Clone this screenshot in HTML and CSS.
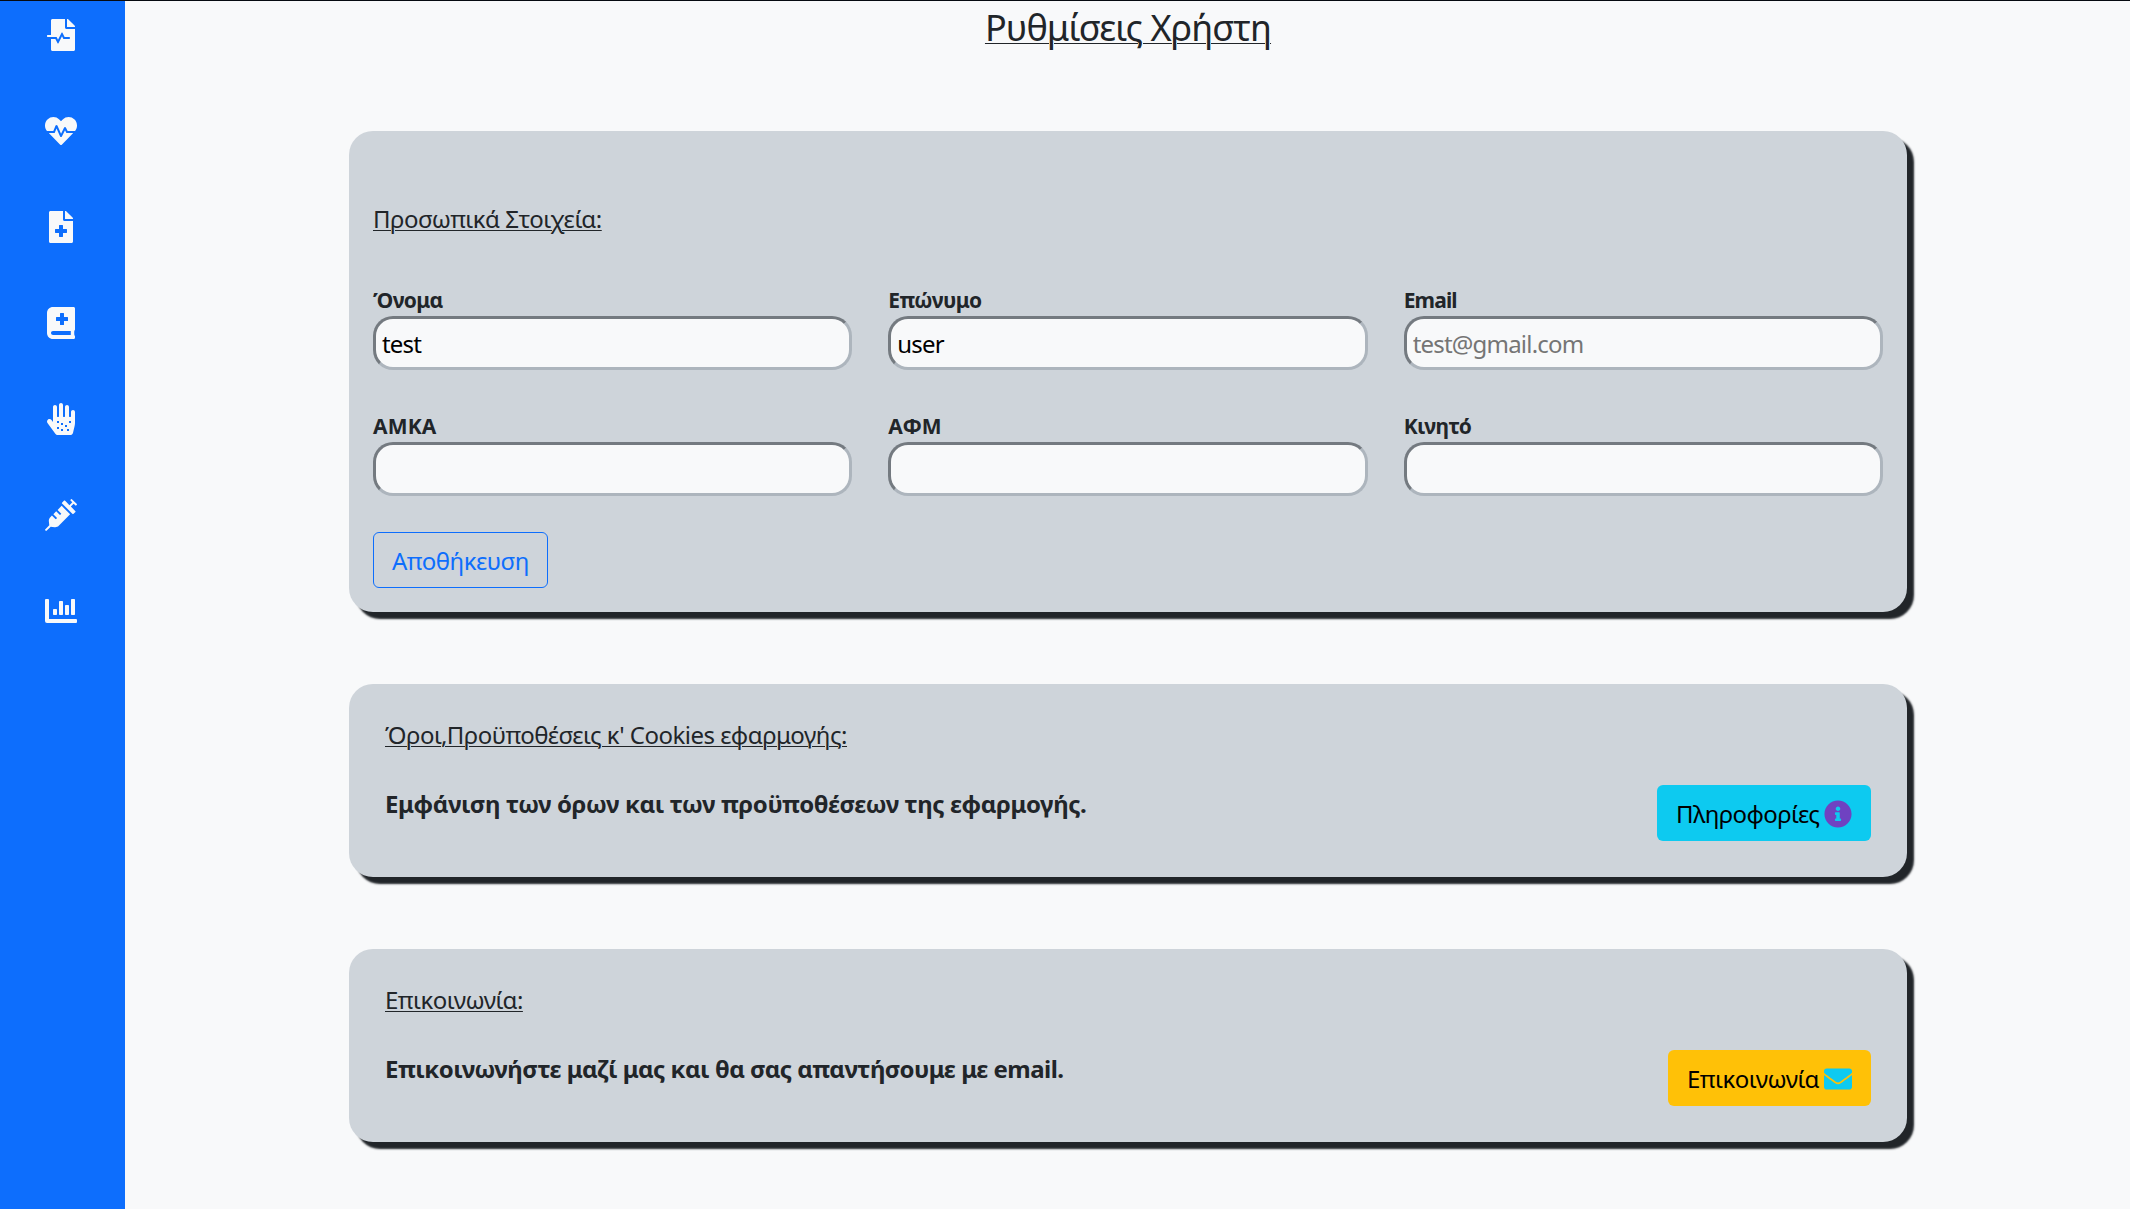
FILE: index.html
```html
<!DOCTYPE html>
<html lang="el">
<head>
<meta charset="utf-8">
<title>Ρυθμίσεις Χρήστη</title>
<link rel="stylesheet" href="styles.css">
</head>
<body>
<div class="app">
  <nav class="sidebar">
    <a class="nav-item"><svg class="icon" viewBox="0 0 448 512"><path d="M288 136V0H88C74.700 0 64 10.700 64 24v232H8c-4.400 0-8 3.600-8 8v16c0 4.400 3.600 8 8 8h140.900c3 0 5.800 1.700 7.200 4.400l19.900 39.800 56.800-113.700c2.900-5.900 11.400-5.900 14.300 0l34.700 69.500H352c8.800 0 16 7.200 16 16s-7.200 16-16 16h-89.900L240 275.800l-56.800 113.700c-2.900 5.900-11.400 5.900-14.300 0L134.100 320H64v168c0 13.300 10.700 24 24 24h336c13.300 0 24-10.700 24-24V160H312c-13.200 0-24-10.800-24-24zm153-31L343.100 7c-4.500-4.500-10.600-7-17-7H320v128h128v-6.100c0-6.300-2.500-12.400-7-16.900z"/></svg></a>
    <a class="nav-item"><svg class="icon" viewBox="0 0 512 512"><path d="M320.200 243.800l-49.700 99.400c-6 12.100-23.400 11.700-28.900-.6l-56.900-126.300-30 71.700H60.600l182.500 186.500c7.100 7.300 18.600 7.300 25.700 0L451.400 288H342.300l-22.100-44.200zM473.700 73.900l-2.400-2.500c-51.500-52.600-135.800-52.600-187.400 0L256 100l-27.900-28.500c-51.500-52.700-135.900-52.700-187.400 0l-2.400 2.400C-10.400 123.700-12.500 203 31 256h102.400l35.900-86.200c5.400-12.900 23.600-13.100 29.200-.4l58.200 129.300 49-97.900c5.900-11.800 22.700-11.800 28.600 0l27.600 55.200H481c43.500-53 41.400-132.300-7.300-182.100z"/></svg></a>
    <a class="nav-item"><svg class="icon" viewBox="0 0 384 512"><path d="M377 105L279.100 7c-4.500-4.500-10.600-7-17-7H256v128h128v-6.100c0-6.300-2.500-12.400-7-16.900zm-153 31V0H24C10.700 0 0 10.700 0 24v464c0 13.300 10.700 24 24 24h336c13.300 0 24-10.700 24-24V160H248c-13.200 0-24-10.800-24-24zm64 160v48c0 4.400-3.600 8-8 8h-56v56c0 4.400-3.600 8-8 8h-48c-4.400 0-8-3.600-8-8v-56h-56c-4.400 0-8-3.600-8-8v-48c0-4.400 3.600-8 8-8h56v-56c0-4.400 3.600-8 8-8h48c4.400 0 8 3.600 8 8v56h56c4.400 0 8 3.600 8 8z"/></svg></a>
    <a class="nav-item"><svg class="icon" viewBox="0 0 448 512"><path d="M448 358.400V25.600c0-16-9.600-25.600-25.600-25.600H96C41.600 0 0 41.600 0 96v320c0 54.400 41.600 96 96 96h326.400c12.800 0 25.600-9.600 25.600-25.600v-16q0-9.600-9.600-19.200c-3.200-16-3.200-60.800 0-73.600q9.600-4.800 9.600-19.200zM144 168a8 8 0 0 1 8-8h56v-56a8 8 0 0 1 8-8h48a8 8 0 0 1 8 8v56h56a8 8 0 0 1 8 8v48a8 8 0 0 1-8 8h-56v56a8 8 0 0 1-8 8h-48a8 8 0 0 1-8-8v-56h-56a8 8 0 0 1-8-8zm236.800 280H96c-16 0-32-12.800-32-32s12.800-32 32-32h284.800z"/></svg></a>
    <a class="nav-item"><svg class="icon" viewBox="0 0 448 512"><path d="M416 112c-17.600 0-32 14.400-32 32v72c0 4.400-3.600 8-8 8h-16c-4.400 0-8-3.600-8-8V64c0-17.600-14.400-32-32-32s-32 14.400-32 32v152c0 4.400-3.600 8-8 8h-16c-4.400 0-8-3.600-8-8V32c0-17.600-14.400-32-32-32s-32 14.400-32 32v184c0 4.400-3.600 8-8 8h-16c-4.400 0-8-3.600-8-8V64c0-17.600-14.400-32-32-32S96 46.400 96 64v241l-23.600-32.500c-13-17.900-38-21.800-55.900-8.800S-5.300 301.700 7.700 319.600l125.600 172.700c9 12.400 23.500 19.700 38.800 19.700h197.400c22.300 0 41.600-15.300 46.700-37l26.500-112.700c3.500-14.900 5.300-30.100 5.300-45.300V144c0-17.600-14.400-32-32-32z"/><path class="dots" d="M160 288h32v32h-32zM224 320h32v32h-32zM352 288h32v32h-32zM288 352h32v32h-32zM160 384h32v32h-32zM224 416h32v32h-32zM320 416h32v32h-32z"/></svg></a>
    <a class="nav-item"><svg class="icon" viewBox="0 0 512 512"><path d="M201.500 174.800l55.700 55.800c3.100 3.100 3.100 8.200 0 11.300l-11.300 11.300c-3.100 3.100-8.200 3.100-11.300 0l-55.700-55.800-45.300 45.300 55.800 55.800c3.100 3.100 3.100 8.200 0 11.300l-11.300 11.300c-3.100 3.100-8.200 3.100-11.300 0L111 265.200l-26.400 26.400c-17.300 17.300-25.600 41.100-23 65.400l7.100 63.600L2.300 487c-3.100 3.100-3.100 8.200 0 11.300l11.300 11.300c3.100 3.100 8.200 3.100 11.300 0l66.300-66.300 63.600 7.100c23.900 2.600 47.900-5.400 65.400-23l181.900-181.900-135.700-135.700-64.900 65zm308.200-93.300L430.500 2.300c-3.100-3.100-8.200-3.100-11.300 0l-11.300 11.300c-3.100 3.100-3.100 8.200 0 11.300l28.300 28.300-45.300 45.300-56.600-56.600-17-17c-3.100-3.100-8.200-3.100-11.300 0l-33.900 33.900c-3.100 3.100-3.100 8.200 0 11.300l17 17L424.800 223l17 17c3.100 3.100 8.200 3.100 11.300 0l33.900-34c3.100-3.100 3.100-8.200 0-11.300l-73.500-73.500 45.300-45.300 28.300 28.300c3.100 3.100 8.200 3.100 11.300 0l11.300-11.300c3.100-3.200 3.100-8.200 0-11.400z"/></svg></a>
    <a class="nav-item"><svg class="icon" viewBox="0 0 512 512"><path d="M16 64h32a16 16 0 0 1 16 16v304h432a16 16 0 0 1 16 16v32a16 16 0 0 1-16 16H32a32 32 0 0 1-32-32V80a16 16 0 0 1 16-16zM141 224h38a13 13 0 0 1 13 13v70a13 13 0 0 1-13 13h-38a13 13 0 0 1-13-13v-70a13 13 0 0 1 13-13zM237 96h38a13 13 0 0 1 13 13v198a13 13 0 0 1-13 13h-38a13 13 0 0 1-13-13V109a13 13 0 0 1 13-13zM333 160h38a13 13 0 0 1 13 13v134a13 13 0 0 1-13 13h-38a13 13 0 0 1-13-13V173a13 13 0 0 1 13-13zM429 64h38a13 13 0 0 1 13 13v230a13 13 0 0 1-13 13h-38a13 13 0 0 1-13-13V77a13 13 0 0 1 13-13z"/></svg></a>
  </nav>
  <main class="content">
    <h1 class="page-title">Ρυθμίσεις Χρήστη</h1>

    <form class="card card-profile">
      <h2 class="card-heading profile-heading">Προσωπικά Στοιχεία:</h2>
      <div class="fields">
        <label class="field"><span class="label">Όνομα</span><input class="input" type="text" value="test"></label>
        <label class="field"><span class="label">Επώνυμο</span><input class="input" type="text" value="user"></label>
        <label class="field"><span class="label label-latin">Email</span><input class="input" type="text" placeholder="test@gmail.com"></label>
        <label class="field"><span class="label label-caps">ΑΜΚΑ</span><input class="input" type="text"></label>
        <label class="field"><span class="label label-caps">ΑΦΜ</span><input class="input" type="text"></label>
        <label class="field"><span class="label">Κινητό</span><input class="input" type="text"></label>
      </div>
      <button class="btn btn-save" type="button">Αποθήκευση</button>
    </form>

    <section class="card card-info">
      <h2 class="card-heading">Όροι,Προϋποθέσεις κ' Cookies εφαρμογής:</h2>
      <div class="card-row">
        <p class="card-text terms-text">Εμφάνιση των όρων και των προϋποθέσεων της εφαρμογής.</p>
        <button class="btn btn-info" type="button">Πληροφορίες<svg class="btn-icon icon-info" viewBox="0 0 512 512"><path d="M256 8C119.043 8 8 119.083 8 256c0 136.997 111.043 248 248 248s248-111.003 248-248C504 119.083 392.957 8 256 8zm0 110c23.196 0 42 18.804 42 42s-18.804 42-42 42-42-18.804-42-42 18.804-42 42-42zm56 254c0 6.627-5.373 12-12 12h-88c-6.627 0-12-5.373-12-12v-24c0-6.627 5.373-12 12-12h12v-64h-12c-6.627 0-12-5.373-12-12v-24c0-6.627 5.373-12 12-12h64c6.627 0 12 5.373 12 12v100h12c6.627 0 12 5.373 12 12v24z"/></svg></button>
      </div>
    </section>

    <section class="card card-info">
      <h2 class="card-heading">Επικοινωνία:</h2>
      <div class="card-row">
        <p class="card-text contact-text">Επικοινωνήστε μαζί μας και θα σας απαντήσουμε με email.</p>
        <button class="btn btn-contact" type="button">Επικοινωνία<svg class="btn-icon icon-mail" viewBox="0 0 512 512"><path d="M502.300 190.800c3.900-3.100 9.700-.2 9.700 4.700V400c0 26.500-21.500 48-48 48H48c-26.500 0-48-21.500-48-48V195.600c0-5 5.700-7.800 9.700-4.700 22.400 17.400 52.100 39.500 154.100 113.600 21.100 15.400 56.700 47.800 92.200 47.600 35.700.3 72-32.800 92.300-47.600 102-74.100 131.600-96.300 154-113.700zM256 320c23.200.4 56.600-29.200 73.400-41.400 132.700-96.300 142.800-104.700 173.400-128.700 5.800-4.500 9.200-11.500 9.200-18.900v-19c0-26.500-21.500-48-48-48H48c-26.500 0-48 21.500-48 48v19c0 7.400 3.400 14.300 9.200 18.900 30.600 23.900 40.700 32.400 173.400 128.700 16.800 12.200 50.200 41.800 73.400 41.400z"/></svg></button>
      </div>
    </section>
  </main>
</div>
</body>
</html>
```

FILE: styles.css
```css
* {
  box-sizing: border-box;
}

body {
  margin: 0;
  background: #f8f9fa;
  color: #212529;
  font-family: "Noto Sans", "Open Sans", sans-serif;
  font-size: 24px;
  line-height: 36px;
}

.app {
  display: flex;
  height: 1209px;
  overflow: hidden;
  border-top: 1px solid #060a10;
}

.sidebar {
  display: flex;
  flex-direction: column;
  gap: 64px;
  flex: 0 0 125px;
  padding: 18px 3px 0 0;
  background: #0d6efd;
}

.nav-item {
  display: flex;
  justify-content: center;
  height: 32px;
}

.icon {
  height: 32px;
  fill: #f8f9fa;
}

.dots {
  fill: #0d6efd;
}

.content {
  flex: 1;
  padding: 5px 223px 0 224px;
}

.page-title {
  margin: 0 0 82px;
  font-size: 36px;
  font-weight: 400;
  line-height: 43px;
  letter-spacing: -0.94px;
  text-align: center;
  text-decoration: underline 1px;
  text-underline-offset: 2px;
}

.card {
  margin-bottom: 72px;
  border-radius: 24px;
  background: #ced4da;
  box-shadow: 7px 7px 2px #212529;
}

.card-profile {
  padding: 70px 24px 24px;
}

.card-info {
  padding: 36px;
}

.card-heading {
  margin: 0;
  font-size: 24px;
  font-weight: 400;
  line-height: 29px;
  letter-spacing: -0.5px;
  text-decoration: underline 1px;
  text-underline-offset: 2px;
}

.profile-heading {
  line-height: 36px;
}

.fields {
  display: grid;
  grid-template-columns: repeat(3, 1fr);
  gap: 40px 36px;
  margin: 47px 0 36px;
}

.field {
  display: flex;
  flex-direction: column;
}

.label {
  font-size: 21px;
  font-weight: 700;
  line-height: 32px;
  letter-spacing: -0.6px;
}

.label-caps {
  letter-spacing: 0.2px;
}

.label-latin {
  letter-spacing: -0.85px;
}

.input {
  width: 100%;
  height: 54px;
  padding: 0 6px;
  border: 3px solid;
  border-color: #747a80 #adb5bd #adb5bd #747a80;
  border-radius: 20px;
  background: #f8f9fa;
  color: #000;
  font: 24px "Noto Sans", "Open Sans", sans-serif;
  letter-spacing: -0.8px;
}

.input::placeholder {
  color: #757575;
}

.card-row {
  display: flex;
  align-items: flex-start;
  justify-content: space-between;
  margin-top: 36px;
}

.card-text {
  margin: 1px 0 0;
  font-weight: 700;
}

.terms-text {
  letter-spacing: -0.4px;
}

.contact-text {
  letter-spacing: -0.53px;
}

.btn {
  display: flex;
  align-items: center;
  justify-content: space-between;
  height: 56px;
  padding: 1px 18px 0;
  border: 1px solid transparent;
  border-radius: 6px;
  color: #000;
  font: 24px/36px "Noto Sans", "Open Sans", sans-serif;
  letter-spacing: -0.5px;
}

.btn-save {
  width: 175px;
  border-color: #0d6efd;
  background: transparent;
  color: #0d6efd;
}

.btn-info {
  width: 214px;
  background: #0dcaf0;
  letter-spacing: -0.6px;
}

.btn-contact {
  width: 203px;
  background: #ffc107;
}

.btn-icon {
  width: 28px;
  height: 28px;
}

.icon-info {
  fill: #6f42c1;
}

.icon-mail {
  fill: #0dcaf0;
}
```
